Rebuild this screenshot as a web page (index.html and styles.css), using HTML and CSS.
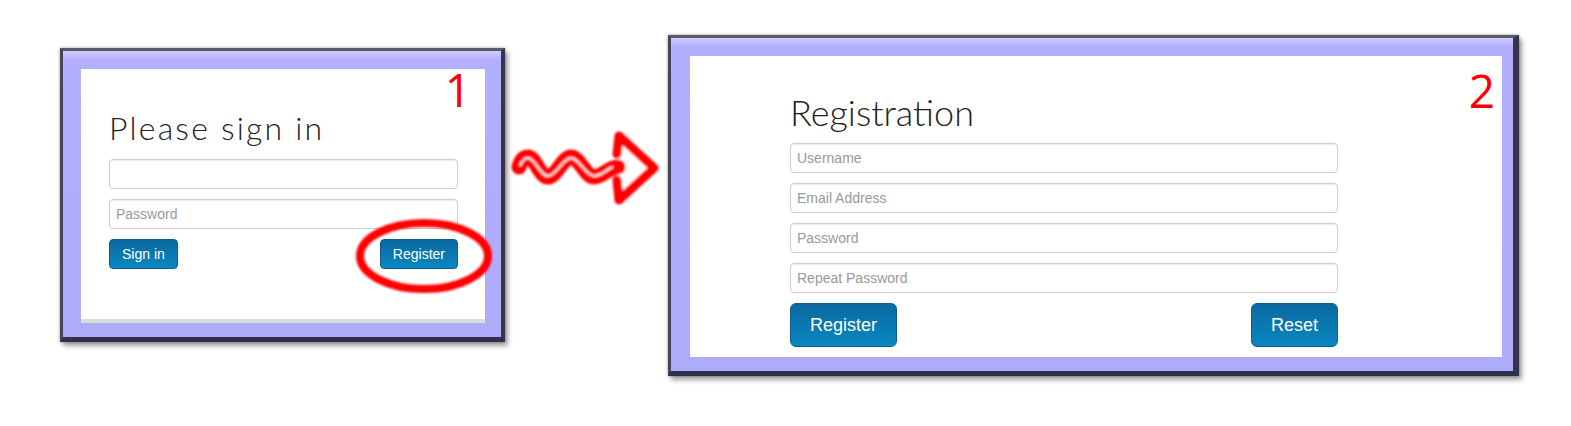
FILE: index.html
```html
<!DOCTYPE html>
<html lang="en">
<head>
<meta charset="utf-8">
<title>Sign in to Registration</title>
<link rel="stylesheet" href="styles.css">
</head>
<body>
<div class="scene">
  <section class="frame frame-login">
    <div class="card card-login">
      <h2 class="title title-login">Please sign in</h2>
      <input class="field" type="text">
      <input class="field" type="password" placeholder="Password">
      <div class="actions">
        <button class="btn btn-sm" type="button">Sign in</button>
        <button class="btn btn-sm" type="button">Register</button>
      </div>
      <span class="step step-1">1</span>
    </div>
    <svg class="highlight" width="150" height="90" viewBox="0 0 150 90">
      <defs>
        <filter id="soft1" x="-10%" y="-10%" width="120%" height="120%">
          <feGaussianBlur stdDeviation="1.1"/>
        </filter>
      </defs>
      <ellipse cx="71" cy="45" rx="64" ry="33" fill="none" stroke="#ff0000" stroke-width="8" filter="url(#soft1)"/>
    </svg>
  </section>

  <svg class="arrow" width="163" height="95" viewBox="0 0 163 95">
    <defs>
      <filter id="soft2" x="-10%" y="-10%" width="120%" height="120%">
        <feGaussianBlur stdDeviation="0.9"/>
      </filter>
    </defs>
    <g filter="url(#soft2)">
      <path d="M112,34 L114,16 L149,48 L114,80 L112,60" fill="#ffffff" stroke="#ff0000" stroke-width="9" stroke-linejoin="round" stroke-linecap="round"/>
      <path d="M14,47 C16,40 19,37 23,37 C30,37 35,57 43,57 C51,57 58,37 66,37 C74,37 81,57 89,57 C97,57 104,47 113,47" fill="none" stroke="#ff0000" stroke-width="15" stroke-linecap="round"/>
      <path d="M15,46 C17,41 20,38 23,38 C30,38 35,56 43,56 C51,56 58,38 66,38 C74,38 81,56 89,56 C97,56 103,48 108,47" fill="none" stroke="#ffd9d9" stroke-width="2.5"/>
    </g>
  </svg>

  <section class="frame frame-reg">
    <div class="card card-reg">
      <h2 class="title title-reg">Registration</h2>
      <input class="field" type="text" placeholder="Username">
      <input class="field" type="email" placeholder="Email Address">
      <input class="field" type="password" placeholder="Password">
      <input class="field" type="password" placeholder="Repeat Password">
      <div class="actions">
        <button class="btn btn-lg" type="button">Register</button>
        <button class="btn btn-lg" type="button">Reset</button>
      </div>
      <span class="step step-2">2</span>
    </div>
  </section>
</div>
</body>
</html>
```

FILE: styles.css
```css
* { box-sizing: border-box; }

html, body {
  margin: 0;
  padding: 0;
  background: #ffffff;
}

body {
  width: 1571px;
  height: 426px;
  overflow: hidden;
  font-family: "Liberation Sans", Arial, sans-serif;
}

.scene {
  display: flex;
  align-items: flex-start;
  padding-left: 60px;
}

.frame {
  position: relative;
  border-style: solid;
  border-color: #5b5b66 #34344a #30304a #46465a;
  background: linear-gradient(#cfcdff 0, #b2affd 9px, #aeabfb 100%);
  box-shadow: 0 0 3px rgba(0, 0, 0, 0.35), 3px 4px 5px rgba(0, 0, 0, 0.35);
}

.frame-login {
  margin-top: 48px;
  border-width: 3px 4px 5px 3px;
  padding: 18px 16px 14px 18px;
}

.frame-reg {
  margin-top: 35px;
  border-width: 3px 6px 5px 3px;
  padding: 18px 11px 14px 19px;
}

.card {
  position: relative;
  background: #ffffff;
  display: flex;
  flex-direction: column;
}

.card-login {
  width: 404px;
  padding: 43px 27px 50px 28px;
  border-bottom: 4px solid #dcdcd6;
}

.card-reg {
  width: 812px;
  padding: 38px 164px 10px 100px;
}

.title {
  margin: 0;
  font-family: Lato, "Open Sans", sans-serif;
  font-weight: 300;
  color: #222222;
  line-height: 1;
}

.title-login {
  font-size: 32px;
  margin-bottom: 15px;
  letter-spacing: 2.2px;
}

.title-reg {
  font-size: 36px;
  margin-bottom: 13px;
}

.field {
  display: block;
  width: 100%;
  height: 30px;
  margin: 0 0 10px 0;
  padding: 0 6px;
  border: 1px solid #cccccc;
  border-radius: 4px;
  background: #ffffff;
  box-shadow: inset 0 1px 1px rgba(0, 0, 0, 0.075);
  font-family: "Liberation Sans", Arial, sans-serif;
  font-size: 14px;
  color: #555555;
  outline: none;
}

.field::placeholder {
  color: #999999;
}

.actions {
  display: flex;
  justify-content: space-between;
}

.btn {
  border: 1px solid #0a5e91;
  color: #ffffff;
  font-family: "Liberation Sans", Arial, sans-serif;
  background: linear-gradient(#0b69a0, #0a87c0);
  cursor: pointer;
}

.btn-sm {
  height: 30px;
  padding: 0 12px;
  font-size: 14px;
  border-radius: 4px;
}

.btn-lg {
  height: 44px;
  padding: 0 19px;
  font-size: 18px;
  border-radius: 6px;
}

.step {
  position: absolute;
  font-family: "Open Sans", "Liberation Sans", sans-serif;
  font-size: 46px;
  line-height: 1;
  color: #ff0000;
}

.step-1 {
  top: -3px;
  right: 14px;
}

.step-2 {
  top: 11px;
  right: 7px;
}

.highlight {
  position: absolute;
  left: 290px;
  top: 160px;
}

.arrow {
  display: block;
  margin-top: 120px;
  flex: none;
}
```
